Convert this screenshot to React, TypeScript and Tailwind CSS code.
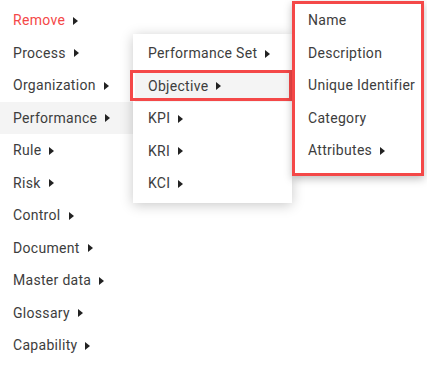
import React from 'react';

const font = { fontFamily: 'Roboto, "Noto Sans", sans-serif' };

function Caret() {
  return (
    <svg width="5" height="8" viewBox="0 0 5 8" className="ml-[8px] shrink-0">
      <path d="M0 0 L5 4 L0 8 Z" fill="#222" />
    </svg>
  );
}

interface RowProps {
  label: string;
  arrow?: boolean;
  active?: boolean;
  danger?: boolean;
}

function Row({ label, arrow = true, active, danger }: RowProps) {
  return (
    <div
      className={
        'flex h-[32.5px] items-center pl-[13px] pt-[1px] text-[14px] tracking-[0.3px] ' +
        (active ? 'bg-[#f4f4f4] ' : '') +
        (danger ? 'text-[#f44848]' : 'text-[#3d3d3d]')
      }
    >
      <span>{label}</span>
      {arrow && <Caret />}
    </div>
  );
}

export default function App() {
  const main = [
    'Process',
    'Organization',
    'Performance',
    'Rule',
    'Risk',
    'Control',
    'Document',
    'Master data',
    'Glossary',
    'Capability',
  ];
  const sub = ['Performance Set', 'Objective', 'KPI', 'KRI', 'KCI'];
  const fields = ['Name', 'Description', 'Unique Identifier', 'Category'];

  return (
    <div className="relative h-[368px] w-[427px] overflow-hidden bg-white" style={font}>
      <div className="w-[133px] pt-[4px]">
        <Row label="Remove" danger />
        {main.map((m) => (
          <Row key={m} label={m} active={m === 'Performance'} />
        ))}
      </div>

      <div className="absolute left-[133px] top-[34px] w-[159px] bg-white py-[3px] shadow-[0_2px_12px_rgba(0,0,0,0.22)]">
        {sub.map((s) => (
          <div key={s} className="pl-[2px]">
            <Row label={s} active={s === 'Objective'} />
          </div>
        ))}
      </div>
      <div className="absolute left-[130px] top-[70px] h-[31px] w-[162px] border-[3px] border-[#f44848]" />

      <div className="absolute left-[292px] top-[1px] w-[132px] border-[3px] border-[#f44848] bg-white shadow-[0_3px_8px_rgba(0,0,0,0.25)]">
        {fields.map((f) => (
          <Row key={f} label={f} arrow={false} />
        ))}
        <Row label="Attributes" />
        <div className="h-[6px]" />
      </div>
    </div>
  );
}
